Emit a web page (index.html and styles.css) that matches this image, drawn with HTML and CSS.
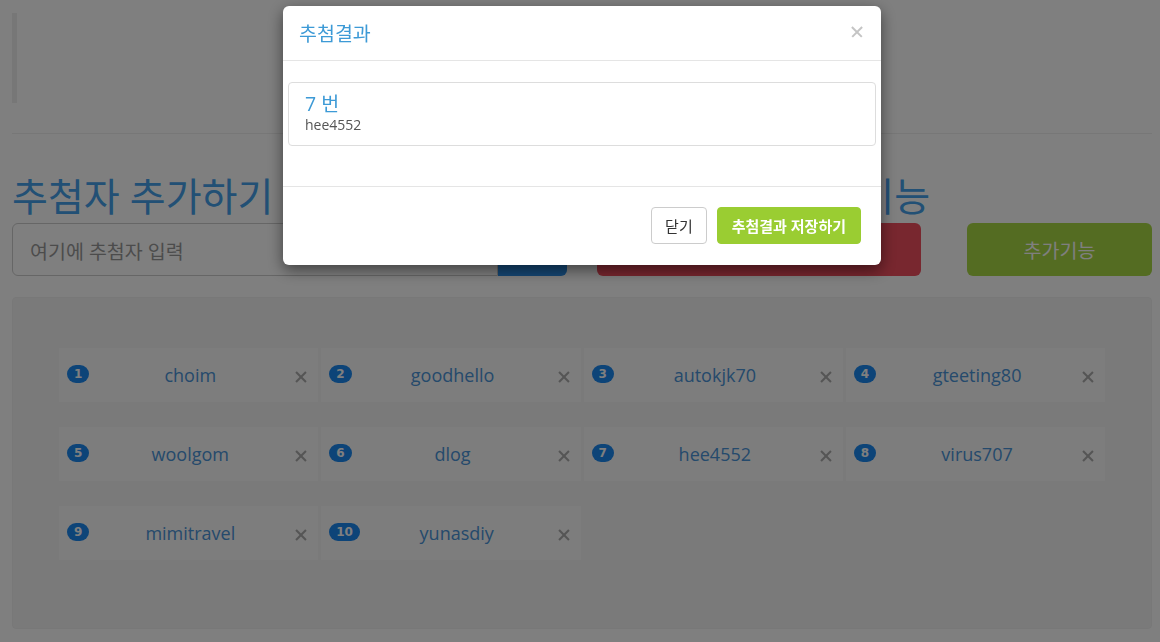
FILE: index.html
```html
<!DOCTYPE html>
<html>
<head>
	<meta charset="utf-8">
	<title>추첨기</title>
	<link rel="stylesheet" href="styles.css">
</head>
<body>
	<div class="wrap">
		<blockquote class="notice"></blockquote>
		<hr>
		<div class="row">
			<div class="col">
				<h1>추첨자 추가하기</h1>
				<div class="input-group">
					<input type="text" placeholder="여기에 추첨자 입력">
					<button class="btn-add">추가</button>
				</div>
			</div>
			<div class="col">
				<h1>추첨하기와 추가기능</h1>
				<div class="actions">
					<button class="btn-draw">추첨하기</button>
					<button class="btn-extra">추가기능</button>
				</div>
			</div>
		</div>
		<div class="well">
			<ul class="names">
				<li><span class="badge">1</span><span class="name">choim</span><span class="del"></span></li>
				<li><span class="badge">2</span><span class="name">goodhello</span><span class="del"></span></li>
				<li><span class="badge">3</span><span class="name">autokjk70</span><span class="del"></span></li>
				<li><span class="badge">4</span><span class="name">gteeting80</span><span class="del"></span></li>
				<li><span class="badge">5</span><span class="name">woolgom</span><span class="del"></span></li>
				<li><span class="badge">6</span><span class="name">dlog</span><span class="del"></span></li>
				<li><span class="badge">7</span><span class="name">hee4552</span><span class="del"></span></li>
				<li><span class="badge">8</span><span class="name">virus707</span><span class="del"></span></li>
				<li><span class="badge">9</span><span class="name">mimitravel</span><span class="del"></span></li>
				<li><span class="badge">10</span><span class="name">yunasdiy</span><span class="del"></span></li>
			</ul>
		</div>
	</div>

	<div class="backdrop"></div>
	<div class="modal">
		<div class="modal-header">
			<h4>추첨결과</h4>
			<span class="close"></span>
		</div>
		<div class="modal-body">
			<div class="result">
				<p class="num">7 번</p>
				<p class="id">hee4552</p>
			</div>
		</div>
		<div class="modal-footer">
			<button class="btn">닫기</button>
			<button class="btn btn-save">추첨결과 저장하기</button>
		</div>
	</div>
</body>
</html>
```

FILE: styles.css
```css
*{margin: 0;padding: 0;box-sizing: border-box;}
ul{list-style: none;}
body {
	font-family: "Open Sans", "Noto Sans CJK KR", sans-serif;
	font-size: 14px;
	color: #333;
	background: #fff;
}
button {
	font-family: "Open Sans", "Noto Sans CJK KR", sans-serif;
	cursor: pointer;
}
.wrap {
	padding: 13px 8px 0 12px;
}
.notice {
	height: 90px;
	border-left: 5px solid #eee;
}
hr {
	border: 0;
	border-top: 1px solid #eee;
	margin-top: 30px;
}
.row {
	display: grid;
	grid-template-columns: 1fr 1fr;
	column-gap: 30px;
}
h1 {
	font-size: 39px;
	font-weight: 400;
	line-height: 43px;
	color: #45a0ea;
	margin: 40px 0 6px;
	white-space: nowrap;
}
.input-group {
	display: flex;
	height: 53px;
}
.input-group input {
	flex: 1;
	min-width: 0;
	border: 1px solid #ccc;
	border-radius: 6px 0 0 6px;
	padding: 4px 17px 0;
	font: 19.5px "Open Sans", "Noto Sans CJK KR", sans-serif;
	color: #555;
}
.input-group input::placeholder {
	color: #999;
}
.btn-add {
	width: 69px;
	border: 0;
	border-radius: 0 6px 6px 0;
	background: #2a8ee8;
	color: #fff;
	font-size: 18px;
}
.actions {
	display: grid;
	grid-template-columns: 324px 1fr;
	column-gap: 46px;
	height: 53px;
}
.actions button {
	border: 0;
	border-radius: 6px;
	color: #fff;
	font-size: 19.5px;
}
.btn-draw {
	background: #f04e5e;
}
.btn-extra {
	background: #a8d844;
}
.well {
	margin-top: 21px;
	background: #f5f5f5;
	border: 1px solid #f0f0f0;
	border-radius: 4px;
	padding: 50px 46px 68px;
}
.names {
	display: grid;
	grid-template-columns: repeat(4, 1fr);
	gap: 25px 3px;
}
.names li {
	height: 54px;
	background: #fafafa;
	display: grid;
	grid-template-columns: auto 1fr 12px;
	align-items: center;
	padding: 0 12px 0 8px;
}
.badge {
	justify-self: start;
	min-width: 22px;
	padding: 3px 7px;
	border-radius: 10px;
	background: #1a88f0;
	color: #fff;
	font: bold 12px/12px "DejaVu Sans", sans-serif;
	text-align: center;
	margin-top: -2px;
}
.name {
	text-align: center;
	font-size: 18px;
	color: #4a94d8;
	padding-right: 3px;
}
.del {
	width: 12px;
	height: 12px;
	position: relative;
	margin-top: 4px;
	margin-left: 1px;
}
.del:before,.del:after,.close:before,.close:after {
	content: "";
	position: absolute;
	left: -1px;
	top: 5px;
	width: 14px;
	height: 2px;
	background: #aaa;
	transform: rotate(45deg);
}
.del:after,.close:after {
	transform: rotate(-45deg);
}
.backdrop {
	position: fixed;
	top: 0;
	right: 0;
	bottom: 0;
	left: 0;
	background: #000;
	opacity: .5;
}
.modal {
	position: fixed;
	top: 6px;
	left: 283px;
	width: 598px;
	background: #fff;
	border-radius: 6px;
	box-shadow: 0 5px 15px rgba(0,0,0,.5);
}
.modal-header {
	display: flex;
	justify-content: space-between;
	align-items: center;
	padding: 16px 18px 14px 16px;
	border-bottom: 1px solid #e5e5e5;
}
.modal-header h4 {
	font-size: 19.5px;
	font-weight: 400;
	line-height: 24px;
	color: #3d9ad6;
}
.close {
	width: 12px;
	height: 12px;
	position: relative;
	margin-top: -4px;
}
.close:before,.close:after {
	height: 1.5px;
	background: #c4c4c4;
}
.modal-body {
	padding: 21px 5px 40px;
}
.result {
	border: 1px solid #ddd;
	border-radius: 4px;
	padding: 10px 16px;
}
.result .num {
	font-size: 19.5px;
	line-height: 22px;
	color: #3d9ad6;
}
.result .id {
	font-size: 14px;
	line-height: 20px;
	color: #555;
}
.modal-footer {
	border-top: 1px solid #e5e5e5;
	padding: 20px 20px 21px;
	display: flex;
	justify-content: flex-end;
	gap: 10px;
}
.btn {
	height: 37px;
	padding: 0 13px;
	font-size: 15px;
	border: 1px solid #ccc;
	border-radius: 4px;
	background: #fff;
	color: #333;
}
.btn-save {
	padding: 0 14px;
	background: #9acd32;
	border-color: #9acd32;
	color: #fff;
	font-weight: bold;
}
```
